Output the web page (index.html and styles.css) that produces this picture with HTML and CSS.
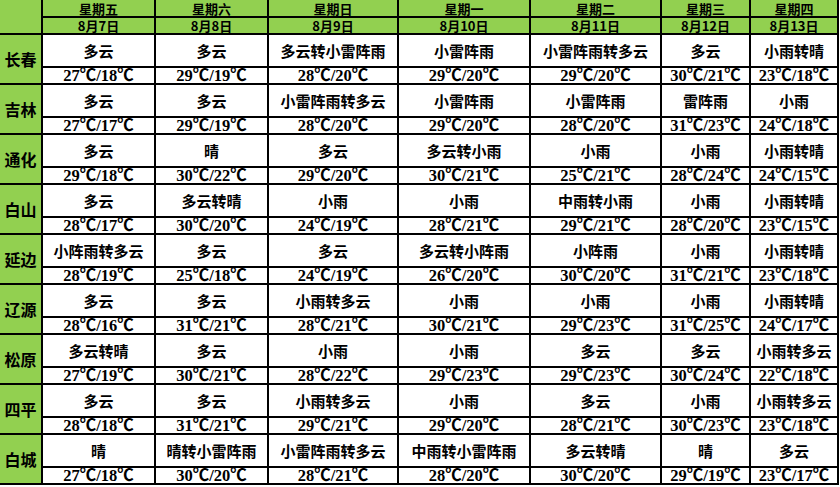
FILE: index.html
```html
<!DOCTYPE html>
<html lang="zh">
<head>
<meta charset="utf-8">
<title>吉林天气预报</title>
<link rel="stylesheet" href="styles.css">
</head>
<body>
<div class="grid">
  <div class="corner"></div>
  <div class="hd">星期五</div><div class="hd">星期六</div><div class="hd">星期日</div><div class="hd">星期一</div><div class="hd">星期二</div><div class="hd">星期三</div><div class="hd">星期四</div>
  <div class="hd">8月7日</div><div class="hd">8月8日</div><div class="hd">8月9日</div><div class="hd">8月10日</div><div class="hd">8月11日</div><div class="hd">8月12日</div><div class="hd">8月13日</div>

  <div class="city">长春</div>
  <div class="w">多云</div><div class="w">多云</div><div class="w">多云转小雷阵雨</div><div class="w">小雷阵雨</div><div class="w">小雷阵雨转多云</div><div class="w">多云</div><div class="w">小雨转晴</div>
  <div class="t">27℃/18℃</div><div class="t">29℃/19℃</div><div class="t">28℃/20℃</div><div class="t">29℃/20℃</div><div class="t">29℃/20℃</div><div class="t">30℃/21℃</div><div class="t">23℃/18℃</div>

  <div class="city">吉林</div>
  <div class="w">多云</div><div class="w">多云</div><div class="w">小雷阵雨转多云</div><div class="w">小雷阵雨</div><div class="w">小雷阵雨</div><div class="w">雷阵雨</div><div class="w">小雨</div>
  <div class="t">27℃/17℃</div><div class="t">29℃/19℃</div><div class="t">28℃/20℃</div><div class="t">29℃/20℃</div><div class="t">28℃/20℃</div><div class="t">31℃/23℃</div><div class="t">24℃/18℃</div>

  <div class="city">通化</div>
  <div class="w">多云</div><div class="w">晴</div><div class="w">多云</div><div class="w">多云转小雨</div><div class="w">小雨</div><div class="w">小雨</div><div class="w">小雨转晴</div>
  <div class="t">29℃/18℃</div><div class="t">30℃/22℃</div><div class="t">29℃/20℃</div><div class="t">30℃/21℃</div><div class="t">25℃/21℃</div><div class="t">28℃/24℃</div><div class="t">24℃/15℃</div>

  <div class="city">白山</div>
  <div class="w">多云</div><div class="w">多云转晴</div><div class="w">小雨</div><div class="w">小雨</div><div class="w">中雨转小雨</div><div class="w">小雨</div><div class="w">小雨转晴</div>
  <div class="t">28℃/17℃</div><div class="t">30℃/20℃</div><div class="t">24℃/19℃</div><div class="t">28℃/21℃</div><div class="t">29℃/21℃</div><div class="t">28℃/20℃</div><div class="t">23℃/15℃</div>

  <div class="city">延边</div>
  <div class="w">小阵雨转多云</div><div class="w">多云</div><div class="w">多云</div><div class="w">多云转小阵雨</div><div class="w">小阵雨</div><div class="w">小雨</div><div class="w">小雨转晴</div>
  <div class="t">28℃/19℃</div><div class="t">25℃/18℃</div><div class="t">24℃/19℃</div><div class="t">26℃/20℃</div><div class="t">30℃/20℃</div><div class="t">31℃/21℃</div><div class="t">23℃/18℃</div>

  <div class="city">辽源</div>
  <div class="w">多云</div><div class="w">多云</div><div class="w">小雨转多云</div><div class="w">小雨</div><div class="w">小雨</div><div class="w">小雨</div><div class="w">小雨转晴</div>
  <div class="t">28℃/16℃</div><div class="t">31℃/21℃</div><div class="t">28℃/21℃</div><div class="t">30℃/21℃</div><div class="t">29℃/23℃</div><div class="t">31℃/25℃</div><div class="t">24℃/17℃</div>

  <div class="city">松原</div>
  <div class="w">多云转晴</div><div class="w">多云</div><div class="w">小雨</div><div class="w">小雨</div><div class="w">多云</div><div class="w">多云</div><div class="w">小雨转多云</div>
  <div class="t">27℃/19℃</div><div class="t">30℃/21℃</div><div class="t">28℃/22℃</div><div class="t">29℃/23℃</div><div class="t">29℃/23℃</div><div class="t">30℃/24℃</div><div class="t">22℃/18℃</div>

  <div class="city">四平</div>
  <div class="w">多云</div><div class="w">多云</div><div class="w">小雨转多云</div><div class="w">小雨</div><div class="w">多云</div><div class="w">小雨</div><div class="w">小雨转多云</div>
  <div class="t">28℃/18℃</div><div class="t">31℃/21℃</div><div class="t">29℃/21℃</div><div class="t">29℃/20℃</div><div class="t">28℃/21℃</div><div class="t">30℃/23℃</div><div class="t">23℃/18℃</div>

  <div class="city">白城</div>
  <div class="w">晴</div><div class="w">晴转小雷阵雨</div><div class="w">小雷阵雨转多云</div><div class="w">中雨转小雷阵雨</div><div class="w">多云转晴</div><div class="w">晴</div><div class="w">多云</div>
  <div class="t">27℃/18℃</div><div class="t">30℃/20℃</div><div class="t">28℃/21℃</div><div class="t">28℃/20℃</div><div class="t">30℃/20℃</div><div class="t">29℃/19℃</div><div class="t">23℃/17℃</div>
</div>
</body>
</html>
```
FILE: styles.css
```css
html, body {
  margin: 0;
  padding: 0;
  background: #ffffff;
}

.grid {
  display: grid;
  width: max-content;
  grid-template-columns: 41px 111px 111px 128px 130px 129px 87px 86px;
  grid-template-rows: 16px 15px repeat(9, 31px 15px);
  gap: 2px;
  padding: 0 2px 2px 0;
  background: #000000;
  font-family: "Noto Sans CJK SC", sans-serif;
  font-weight: 700;
  color: #000000;
}

.grid > div {
  display: flex;
  align-items: center;
  justify-content: center;
  white-space: nowrap;
}

.corner {
  grid-row: span 2;
  background: #92d050;
}

.hd {
  background: #92d050;
  font-size: 13px;
  line-height: 13px;
}

.city {
  grid-row: span 2;
  background: #92d050;
  font-size: 16px;
}

.w {
  background: #ffffff;
  font-size: 15px;
}

.t {
  background: #ffffff;
  font-family: "Liberation Serif", "Noto Sans CJK SC", serif;
  font-size: 16.5px;
  line-height: 15px;
  align-items: flex-end !important;
}
```
